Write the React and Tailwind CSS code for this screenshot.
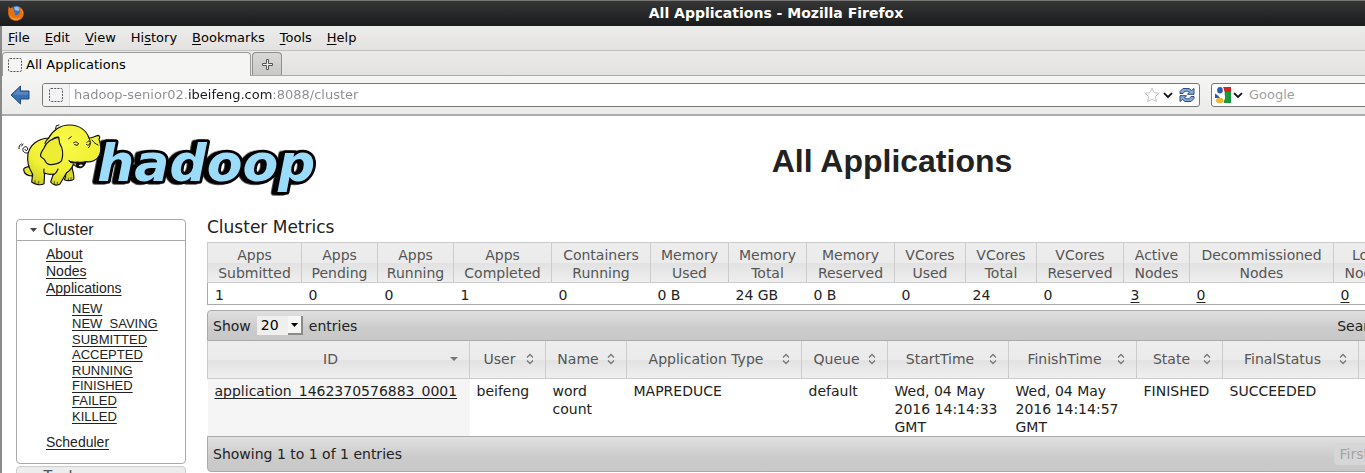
const menus = [
  { name: 'File', key: 0 },
  { name: 'Edit', key: 0 },
  { name: 'View', key: 0 },
  { name: 'History', key: 2 },
  { name: 'Bookmarks', key: 0 },
  { name: 'Tools', key: 0 },
  { name: 'Help', key: 0 },
];

const appStates = [
  'NEW',
  'NEW_SAVING',
  'SUBMITTED',
  'ACCEPTED',
  'RUNNING',
  'FINISHED',
  'FAILED',
  'KILLED',
];

const metrics = [
  { top: 'Apps', bottom: 'Submitted', value: '1', width: 'w-[94px]' },
  { top: 'Apps', bottom: 'Pending', value: '0', width: 'w-[76px]' },
  { top: 'Apps', bottom: 'Running', value: '0', width: 'w-[76px]' },
  { top: 'Apps', bottom: 'Completed', value: '1', width: 'w-[98px]' },
  { top: 'Containers', bottom: 'Running', value: '0', width: 'w-[99px]' },
  { top: 'Memory', bottom: 'Used', value: '0 B', width: 'w-[78px]' },
  { top: 'Memory', bottom: 'Total', value: '24 GB', width: 'w-[78px]' },
  { top: 'Memory', bottom: 'Reserved', value: '0 B', width: 'w-[88px]' },
  { top: 'VCores', bottom: 'Used', value: '0', width: 'w-[71px]' },
  { top: 'VCores', bottom: 'Total', value: '24', width: 'w-[71px]' },
  { top: 'VCores', bottom: 'Reserved', value: '0', width: 'w-[87px]' },
  { top: 'Active', bottom: 'Nodes', value: '3', link: true, width: 'w-[66px]' },
  { top: 'Decommissioned', bottom: 'Nodes', value: '0', link: true, width: 'w-[144px]' },
  { top: 'Lost', bottom: 'Nodes', value: '0', link: true, width: 'w-[66px]' },
  { top: 'Unhealthy', bottom: 'Nodes', value: '0', link: true, width: '' },
];

const columns = [
  { name: 'ID', value: 'application_1462370576883_0001', width: 'w-[262px]' },
  { name: 'User', value: 'beifeng', width: 'w-[76px]' },
  { name: 'Name', value: 'word count', width: 'w-[81px]' },
  { name: 'Application Type', value: 'MAPREDUCE', width: 'w-[175px]' },
  { name: 'Queue', value: 'default', width: 'w-[86px]' },
  { name: 'StartTime', value: 'Wed, 04 May 2016 14:14:33 GMT', width: 'w-[121px]' },
  { name: 'FinishTime', value: 'Wed, 04 May 2016 14:14:57 GMT', width: 'w-[128px]' },
  { name: 'State', value: 'FINISHED', width: 'w-[86px]' },
  { name: 'FinalStatus', value: 'SUCCEEDED', width: 'w-[136px]' },
  { name: 'Progress', value: '', width: '' },
];

const headFill =
  'bg-[linear-gradient(#ededed_0%,#ebebeb_50%,#e2e2e2_51%,#efefef_100%)]';
const barFill = 'bg-[linear-gradient(#e0e0e0,#cbcbcb_60%,#c8c8c8)]';
const linkStyle = 'underline underline-offset-2 [text-decoration-skip-ink:none]';

function FirefoxIcon() {
  return (
    <svg width="16" height="16" viewBox="0 0 16 16" aria-hidden="true">
      <circle cx="8.4" cy="7.4" r="6.6" fill="#3b6fb5" />
      <path d="M6 2.5c2-1.4 5-.8 6.3 1l-2 2.4-3-.6z" fill="#8fc3ea" />
      <path
        d="M.8 1.2 2 3.2l2-.6 1.2 1.6 1.8.3-1.4 1.6.5 1.2 2 .6-1.8 1c.8 1.8 3.8 1.6 5-.3 1-2 .2-4.800-1.300-6.400C13.500 2.600 16 5.500 15.700 9c-.4 4-3.700 6.800-7.700 6.800S.7 13 .3 9C.1 6 .2 3 .8 1.200z"
        fill="#e8700e"
      />
      <path d="M12.600 3.800c2 2.300 2.500 6-.2 8.200 4.200-4 .9-8.200.2-8.200z" fill="#ffd23c" />
      <path d="M2 9.500c1 3 3.500 4.300 6.200 4.100 2-.2 3.400-1 4.300-2.200-.7 2.700-3 3.700-5.100 3.500C4.300 14.600 2.200 12.300 2 9.500z" fill="#f9a825" />
    </svg>
  );
}

function BlankPageIcon() {
  return (
    <svg width="14" height="14" viewBox="0 0 14 14" className="shrink-0" aria-hidden="true">
      <rect x="0.5" y="0.5" width="13" height="13" rx="1.5" fill="none" stroke="#555" strokeDasharray="2 1.2" />
    </svg>
  );
}

function ArrowDown() {
  return (
    <svg width="10" height="7" viewBox="0 0 10 7" className="shrink-0" aria-hidden="true">
      <path d="M1 1.200 5 5l4-3.800" fill="none" stroke="#111" strokeWidth="1.8" />
    </svg>
  );
}

function SortIcon() {
  return (
    <svg width="8" height="12" viewBox="0 0 8 12" className="shrink-0" aria-hidden="true">
      <path d="M1 4.500 4 1.500l3 3M1 7.500l3 3 3-3" fill="none" stroke="#777" strokeWidth="1.3" />
    </svg>
  );
}

function SortedIcon() {
  return (
    <svg width="8" height="12" viewBox="0 0 8 12" className="shrink-0" aria-hidden="true">
      <path d="M0 4h8L4 8z" fill="#777" />
    </svg>
  );
}

function HadoopLogo() {
  return (
    <svg width="302" height="74" viewBox="48 36 906 222" role="img" aria-label="hadoop">
      <defs>
        <radialGradient id="skin" cx="0.5" cy="0.3" r="0.75">
          <stop offset="0" stopColor="#fbfb4a" />
          <stop offset="0.65" stopColor="#f0f035" />
          <stop offset="1" stopColor="#d0d222" />
        </radialGradient>
        <filter id="block" x="-10%" y="-20%" width="120%" height="140%">
          <feDropShadow dx="-11" dy="2" stdDeviation="0" floodColor="#000" />
        </filter>
      </defs>
      <text
        x="292"
        y="213"
        fontFamily="'DejaVu Sans', sans-serif"
        fontSize="156"
        fontWeight="700"
        fontStyle="italic"
        fill="#9bdcfb"
        stroke="#000"
        strokeWidth="17"
        strokeLinejoin="round"
        paintOrder="stroke"
        filter="url(#block)"
      >
        hadoop
      </text>
      <g stroke="#111" strokeWidth="3.5" strokeLinecap="round" strokeLinejoin="round" fill="none">
        <path d="M88 128c-12 4-22-3-19-12 4-9 14-7 14 1-1 6-8 6-8 1M57 116c-1-7 2-11 7-14M65 108l4-6M167 56l2-9 8-2" strokeWidth="3" />
        <path
          d="M88 170c-9 1-17 3-17 9 1 10 10 18 24 19l9-18z"
          fill="#e6e62c"
        />
        <path
          d="M197 190c1 9 0 14-4 19 9 4 22 4 28-1 3-9-3-25-5-37z"
          fill="#d8d926"
        />
        <path
          d="M84 131c6-25 27-45 62-47 12-23 36-40 64-39 28 1 49 16 57 39 10 1 18-7 28-8 5 1 5 7 2 12 5 14 8 34 1 48-7 15-24 21-40 19-4 9-9 17-18 18-9 0-15-5-20-11-3 12-10 20-20 26l-20 34c-9 6-22 3-28-6l8-24c-8 2-18 1-26-3l-2 32c-10 6-27 3-37-5l3-23c-9-14-18-39-14-62z"
          fill="url(#skin)"
        />
        <path
          d="M176 82c-20 2-38 15-44 32-5 9-12 15-10 25 4 7 9 5 12 11 5 12 14 16 25 13 12-1 20-3 26-11 5-17 3-38-6-52z"
          fill="#eded35"
        />
        <path d="M146 84c-5 4-9 10-11 16M176 82c-8-2-14 1-19 7M133 192c-3-6-2-9-1-15M159 195c7-3 12-10 15-18" />
        <path d="M207 152c5 7 14 9 26 4 7 1 15 2 24-1-3 9-7 17-16 18-10 0-14-9-12-17" fill="#111" />
        <path d="M236 167c3-4 9-5 13-2-3 4-8 6-13 2z" fill="#f4f4f4" stroke="none" />
        <path d="M220 99c5-5 12-4 15 2M224 104l8 2 3-5M261 97c3-4 6-5 9-3M260 104c4 3 8 1 11-5M267 84c5 11 6 19-1 29M276 90c5 7 11 12 18 15M206 86l8-6" strokeWidth="3" />
        <path d="M105 212v6M116 214v6M163 215v7M172 217v6M205 205v5M213 203v5" strokeWidth="2" />
      </g>
    </svg>
  );
}

function TitleBar() {
  return (
    <div className="flex h-[26px] items-center border-t border-b border-t-[#777] border-b-[#10202e] bg-linear-to-b from-[#363636] to-[#1b1c1e] px-2">
      <FirefoxIcon />
      <div className="flex-1 pr-4 text-center text-sm font-bold text-white">
        All Applications - Mozilla Firefox
      </div>
    </div>
  );
}

function MenuBar() {
  return (
    <div className="flex h-[25px] items-center gap-[15px] border-b border-[#bfbfbf] bg-linear-to-b from-[#ececeb] to-[#e3e2e0] px-[6px] text-[13px] text-black">
      {menus.map((menu) => (
        <button key={menu.name} type="button">
          {menu.name.slice(0, menu.key)}
          <span className="underline underline-offset-2">{menu.name[menu.key]}</span>
          {menu.name.slice(menu.key + 1)}
        </button>
      ))}
    </div>
  );
}

function TabStrip() {
  return (
    <div className="flex h-[25px] items-end border-b border-[#a9a9a9] bg-linear-to-b from-[#ecebea] to-[#e3e2e0] text-[13px] text-black">
      <div className="-mb-px flex h-6 w-[249px] items-center gap-1 rounded-t border border-b-0 border-[#9a9a9a] bg-[#f5f5f4] px-[5px]">
        <BlankPageIcon />
        All Applications
      </div>
      <button
        type="button"
        aria-label="Open a new tab"
        className="ml-px flex h-[23px] w-[30px] items-center justify-center rounded-t border border-b-0 border-[#8f8f8f] bg-linear-to-b from-[#d9d9d8] to-[#c8c8c7]"
      >
        <svg width="13" height="13" viewBox="0 0 13 13" aria-hidden="true">
          <path d="M5.500 1.500h2v4h4v2h-4v4h-2v-4h-4v-2h4z" fill="#eee" stroke="#555" />
        </svg>
      </button>
    </div>
  );
}

function NavBar() {
  return (
    <div className="flex h-10 items-center border-b-2 border-[#acacac] bg-linear-to-b from-[#f5f5f4] to-[#ebebea] pr-[41px] pl-2 text-[13px]">
      <button type="button" aria-label="Back" className="mr-3">
        <svg width="20" height="20" viewBox="0 0 20 20" aria-hidden="true">
          <path d="M1 10 10.500 1v5H19v8h-8.500v5z" fill="#3b6fb0" stroke="#204a87" strokeLinejoin="round" />
          <path d="M2.800 9.800 9.500 3.500V7H18v2.500z" fill="#5a88c2" />
        </svg>
      </button>
      <div className="flex h-6 flex-1 items-center rounded-[3px] border border-[#777] bg-white pr-1">
        <div className="flex h-full w-[27px] items-center justify-center rounded-l-[2px] border-r border-[#ddd] bg-[#f3f3f3]">
          <BlankPageIcon />
        </div>
        {/* the domain part of the address is darker than the rest */}
        <input
          type="text"
          aria-label="Location"
          defaultValue="hadoop-senior02.ibeifeng.com:8088/cluster"
          className="ml-1 min-w-0 flex-1 bg-[linear-gradient(90deg,#8c8c8c_113px,#1a1a1a_113px,#1a1a1a_198px,#8c8c8c_198px)] bg-clip-text text-transparent outline-none"
        />
        <svg width="16" height="16" viewBox="0 0 16 16" aria-hidden="true">
          <path d="m8 1 2.100 4.700 5 .5-3.800 3.400 1.200 5L8 12l-4.500 2.600 1.200-5L.9 6.200l5-.5z" fill="#fff" stroke="#c4c4c4" />
        </svg>
        <button type="button" aria-label="Show history" className="ml-[3px]">
          <ArrowDown />
        </button>
        <button type="button" aria-label="Reload" className="ml-[6px]">
          <svg width="16" height="16" viewBox="0 0 16 16" aria-hidden="true">
            <path d="M1 6.500V4.500L4 1.500h6L12.500 3.500 15 1.500V7.300H8.500L10.500 5C8.500 3.500 5 4 4 6.500z" fill="#88a9d4" stroke="#274b85" />
            <path d="M15 9.500v2L12 14.500H6L3.500 12.500 1 14.500V8.700h6.500L5.500 11c2 1.500 5.500 1 6.500-1.500z" fill="#88a9d4" stroke="#274b85" />
          </svg>
        </button>
      </div>
      <div className="ml-[11px] flex h-6 w-[300px] items-center rounded-[3px] border border-[#777] bg-white pl-[3px]">
        <svg width="16" height="16" viewBox="0 0 16 16" aria-hidden="true">
          <path d="M8 0h8v5H9.500z" fill="#d8251d" />
          <path d="M9.500 5H16v11H8.500L10 10z" fill="#199a3c" />
          <path d="M0 0h8l1.500 5L8 8l2 3-2 5H0z" fill="#fff" />
          <ellipse cx="5" cy="3.2" rx="2.8" ry="3.2" fill="#2b5cae" />
          <path d="M0 6.500 3 8.500 5 11H0z" fill="#2b5cae" />
          <ellipse cx="4.8" cy="13.4" rx="3.8" ry="2.6" fill="#f2b632" />
          <path d="M6.500 7.500 10 10l-1.500 1.500z" fill="#fff" />
        </svg>
        <button type="button" aria-label="Choose search engine" className="ml-[2px]">
          <ArrowDown />
        </button>
        <input
          type="text"
          aria-label="Web search"
          placeholder="Google"
          className="ml-[6px] min-w-0 flex-1 outline-none placeholder:text-[#a0a0a0]"
        />
      </div>
    </div>
  );
}

function Sidebar() {
  return (
    <nav className="w-[170px] shrink-0 font-['Liberation_Sans',Arial,sans-serif]">
      <div className="rounded border border-[#aaa] bg-white pb-3">
        <h3 className="flex h-[21px] items-center gap-[5px] border-b border-[#aaa] pl-3 text-base">
          <svg width="9" height="5" viewBox="0 0 9 5" aria-hidden="true">
            <path d="M1 0h7L4.500 4z" fill="#444" />
          </svg>
          Cluster
        </h3>
        <ul className="mt-[5px] ml-[29px] text-sm leading-[17px]">
          <li><a href="#about" className={linkStyle}>About</a></li>
          <li><a href="#nodes" className={linkStyle}>Nodes</a></li>
          <li>
            <a href="#apps" className={linkStyle}>Applications</a>
            <ul className="mt-1 mb-[10px] ml-[26px] grid h-[123px] text-[13px] leading-[15px]">
              {appStates.map((state) => (
                <li key={state}>
                  <a href={`#apps/${state}`} className={linkStyle}>{state}</a>
                </li>
              ))}
            </ul>
          </li>
          <li><a href="#scheduler" className={linkStyle}>Scheduler</a></li>
        </ul>
      </div>
      <h3 className="mt-[2px] rounded border border-[#ccc] bg-[#ececec] pl-[26px] text-base leading-5 text-[#555]">
        Tools
      </h3>
    </nav>
  );
}

function MetricsTable() {
  return (
    <table className="w-full table-fixed border-collapse border border-[#aaa]">
      <thead>
        <tr className={`h-10 ${headFill}`}>
          {metrics.map((metric) => (
            <th
              key={`${metric.top} ${metric.bottom}`}
              className={`${metric.width} border border-[#ccc] pt-[3px] text-center font-normal text-[#555]`}
            >
              {metric.top}
              <br />
              {metric.bottom}
            </th>
          ))}
        </tr>
      </thead>
      <tbody>
        <tr className="h-[22px]">
          {metrics.map((metric) => (
            <td key={`${metric.top} ${metric.bottom}`} className="pt-[3px] pl-[7px]">
              {metric.link ? (
                <a href="#nodes" className={linkStyle}>{metric.value}</a>
              ) : (
                metric.value
              )}
            </td>
          ))}
        </tr>
      </tbody>
    </table>
  );
}

function AppsTable() {
  return (
    <div className="mt-[5px]">
      <div className={`flex h-[31px] items-center justify-between rounded-t border border-[#aaa] pr-[9px] pl-[5px] ${barFill}`}>
        <label className="flex items-center gap-[6px]">
          Show
          <span className="relative">
            <select defaultValue="20" className="block h-[19px] w-[46px] appearance-none bg-[#efefee] pl-1 text-sm leading-[19px] text-black">
              <option>20</option>
              <option>40</option>
              <option>60</option>
              <option>80</option>
              <option>100</option>
            </select>
            <span className="pointer-events-none absolute top-0 right-0 flex h-[19px] w-[15px] items-center justify-center border-r-2 border-b-2 border-[#8a8a8a] bg-[#f6f6f5]">
              <svg width="7" height="4" viewBox="0 0 7 4" aria-hidden="true">
                <path d="M0 0h7L3.500 4z" fill="#000" />
              </svg>
            </span>
          </span>
          entries
        </label>
        <label className="flex items-center gap-1">
          Search:
          <input type="text" className="h-[22px] w-[140px] border border-[#999] bg-white px-1" />
        </label>
      </div>
      <table className="w-full table-fixed border-collapse">
        <thead>
          <tr className={`h-[37px] ${headFill}`}>
            {columns.map((column, i) => (
              <th key={column.name} className={`${column.width} border border-t-0 border-[#ccc] p-0 font-normal text-[#555]`}>
                <button type="button" className="flex w-full items-center pr-[11px] pl-[3px]">
                  <span className="flex-1 text-center">{column.name}</span>
                  {i === 0 ? <SortedIcon /> : <SortIcon />}
                </button>
              </th>
            ))}
          </tr>
        </thead>
        <tbody>
          <tr className="align-top">
            {columns.map((column, i) => (
              <td key={column.name} className={i === 0 ? 'bg-[#f5f5f5] pt-[3px] pl-[7px]' : 'pt-[3px] pr-1 pl-[7px]'}>
                {i === 0 ? (
                  <a href="#app" className={linkStyle}>{column.value}</a>
                ) : (
                  column.value
                )}
              </td>
            ))}
          </tr>
        </tbody>
      </table>
      <div className={`flex h-9 items-center justify-between rounded-b border border-[#aaa] pr-2 pl-[5px] ${barFill}`}>
        <span>Showing 1 to 1 of 1 entries</span>
        <div className="flex gap-px text-[#a3a3a3]">
          {['First', 'Previous', 'Next', 'Last'].map((page) => (
            <button key={page} type="button" disabled className="rounded-sm border border-[#d6d6d6] bg-[#d6d6d6] px-[5px] py-px">
              {page}
            </button>
          ))}
        </div>
      </div>
    </div>
  );
}

export default function App() {
  return (
    <div className="h-screen overflow-hidden bg-white font-['DejaVu_Sans',sans-serif] text-[#222]">
      <div className="min-w-[1552px]">
        <TitleBar />
        <div className="border-l-2 border-[#8a8a8a]">
          <MenuBar />
          <TabStrip />
          <NavBar />
          <header className="flex items-start pt-[6px] pr-[86px] pl-[14px]">
            <HadoopLogo />
            <h1 className="flex-1 pt-[15px] text-center font-['Liberation_Sans',Arial,sans-serif] text-[32px] leading-12 font-bold">
              All Applications
            </h1>
          </header>
          <div className="flex items-start gap-[21px] pt-[23px] pr-2 pl-[14px]">
            <Sidebar />
            <main className="min-w-0 flex-1 text-sm leading-[18px]">
              <h2 className="mb-[7px] text-[17px] leading-4">Cluster Metrics</h2>
              <MetricsTable />
              <AppsTable />
            </main>
          </div>
        </div>
      </div>
    </div>
  );
}
